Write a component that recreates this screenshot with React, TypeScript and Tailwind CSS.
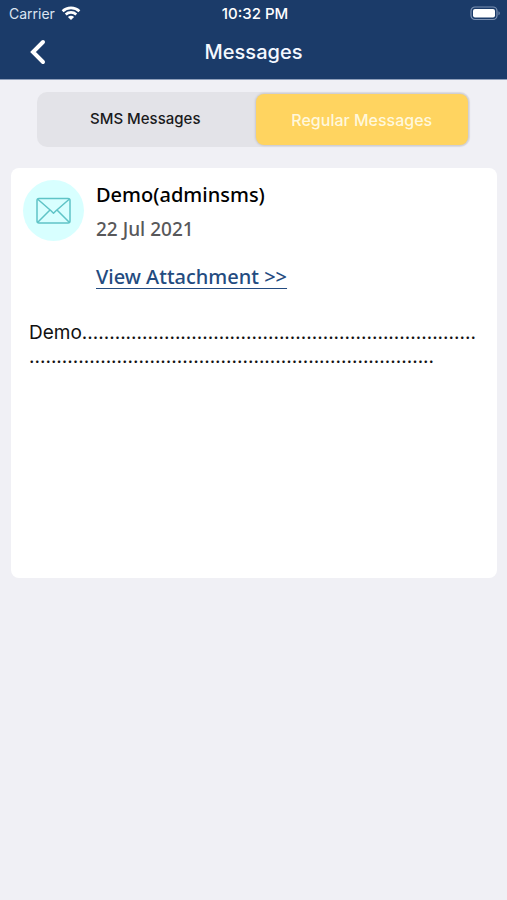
import { useState } from "react";

interface Message {
    id: number;
    sender: string;
    date: string;
    body: string;
}

const tabs = ["SMS Messages", "Regular Messages"];

const messages: Message[] = [
    {
        id: 1,
        sender: "Demo(adminsms)",
        date: "22 Jul 2021",
        body: "Demo" + ".".repeat(146),
    },
];

function StatusBar() {
    return (
        <div className="grid grid-cols-3 items-center h-7 pl-[9px] pr-[6px] text-sm text-white">
            <div className="flex items-center gap-[6px]">
                <span className="text-[#dbe4f1]">Carrier</span>
                <svg className="w-5 h-4" viewBox="0 0 20 16" fill="none" stroke="white" strokeWidth="2.6">
                    <path d="M1.6 5.2C6.2 0.8 13.8 0.8 18.4 5.2" />
                    <path d="M4.7 8.5C7.7 5.7 12.3 5.7 15.3 8.5" />
                    <path d="M10 14L6.9 10.9C8.7 9.3 11.3 9.3 13.1 10.9Z" fill="white" stroke="none" />
                </svg>
            </div>
            <span className="text-center text-[15px] font-medium">10:32 PM</span>
            <svg className="w-8 h-4 justify-self-end" viewBox="0 0 32 16">
                <rect x="2" y="1" width="26" height="12.5" rx="4" fill="none" stroke="#7d92b3" strokeWidth="1.2" />
                <rect x="4" y="3" width="22" height="8.5" rx="2" fill="white" />
                <path d="M29.5 5.2C31.2 5.8 31.2 8.7 29.5 9.3Z" fill="#7d92b3" />
            </svg>
        </div>
    );
}

function MessageCard({ message }: { message: Message }) {
    return (
        <article className="min-h-[410px] px-3 pt-3 rounded-lg bg-white">
            <div className="flex gap-3 font-['Noto_Sans',sans-serif] font-medium text-xl leading-7">
                <div className="flex items-center justify-center shrink-0 size-[61px] rounded-full bg-[#d8ffff]">
                    <svg className="w-9 h-7" viewBox="0 0 36 28" fill="none" stroke="#5fc4c7" strokeWidth="1.5" strokeLinejoin="round">
                        <rect x="1" y="1.5" width="33" height="24.5" rx="2" />
                        <path d="M1.5 2L15 13.8L17.5 16.2L20 13.8L33.5 2" />
                        <path d="M1.5 25.5L14 13M33.5 25.5L21 13" />
                    </svg>
                </div>
                <div className="pt-px">
                    <h2 className="text-black">{message.sender}</h2>
                    <p className="mt-[6px] text-[19px] text-[#58585a]">{message.date}</p>
                    <a href="#" className="inline-block mt-5 text-[#234b80] underline underline-offset-4 decoration-1">
                        View Attachment &gt;&gt;
                    </a>
                </div>
            </div>
            <p className="mt-[30px] px-[6px] text-[19px] leading-6 text-[#111111] wrap-anywhere">{message.body}</p>
        </article>
    );
}

export default function App() {
    const [active, setActive] = useState(1);

    return (
        <div className="min-h-screen bg-[#f0f0f5] font-['Inter',sans-serif]">
            <header className="bg-[#1b3b69] border-b border-[#8f9fbb]">
                <StatusBar />
                <div className="grid grid-cols-[40px_1fr_40px] items-center h-12 mb-[3px] px-[17px]">
                    <button aria-label="Back" className="flex justify-center">
                        <svg className="w-5 h-7" viewBox="0 0 20 28" fill="none" stroke="white" strokeWidth="4" strokeLinecap="round">
                            <path d="M16 4L6 14L16 24" />
                        </svg>
                    </button>
                    <h1 className="text-center text-xl font-medium text-[#f4f8ff]">Messages</h1>
                </div>
            </header>

            <div className="grid grid-cols-2 gap-1 mx-[37px] mt-3 p-[2px] rounded-[10px] bg-[#e3e3e8]">
                {tabs.map((tab, index) => (
                    <button
                        key={tab}
                        onClick={() => setActive(index)}
                        className={
                            active === index
                                ? "h-[51px] rounded-lg bg-[#ffd460] text-base font-medium text-[#fff8dc] shadow-[0_0_2px_1px_#c9c8cd]"
                                : "h-[51px] rounded-lg text-[15px] font-medium text-[#1a1a1c]"
                        }
                    >
                        {tab}
                    </button>
                ))}
            </div>

            <main className="ml-[11px] mr-[10px] mt-[21px]">
                {messages.map((message) => (
                    <MessageCard key={message.id} message={message} />
                ))}
            </main>
        </div>
    );
}
